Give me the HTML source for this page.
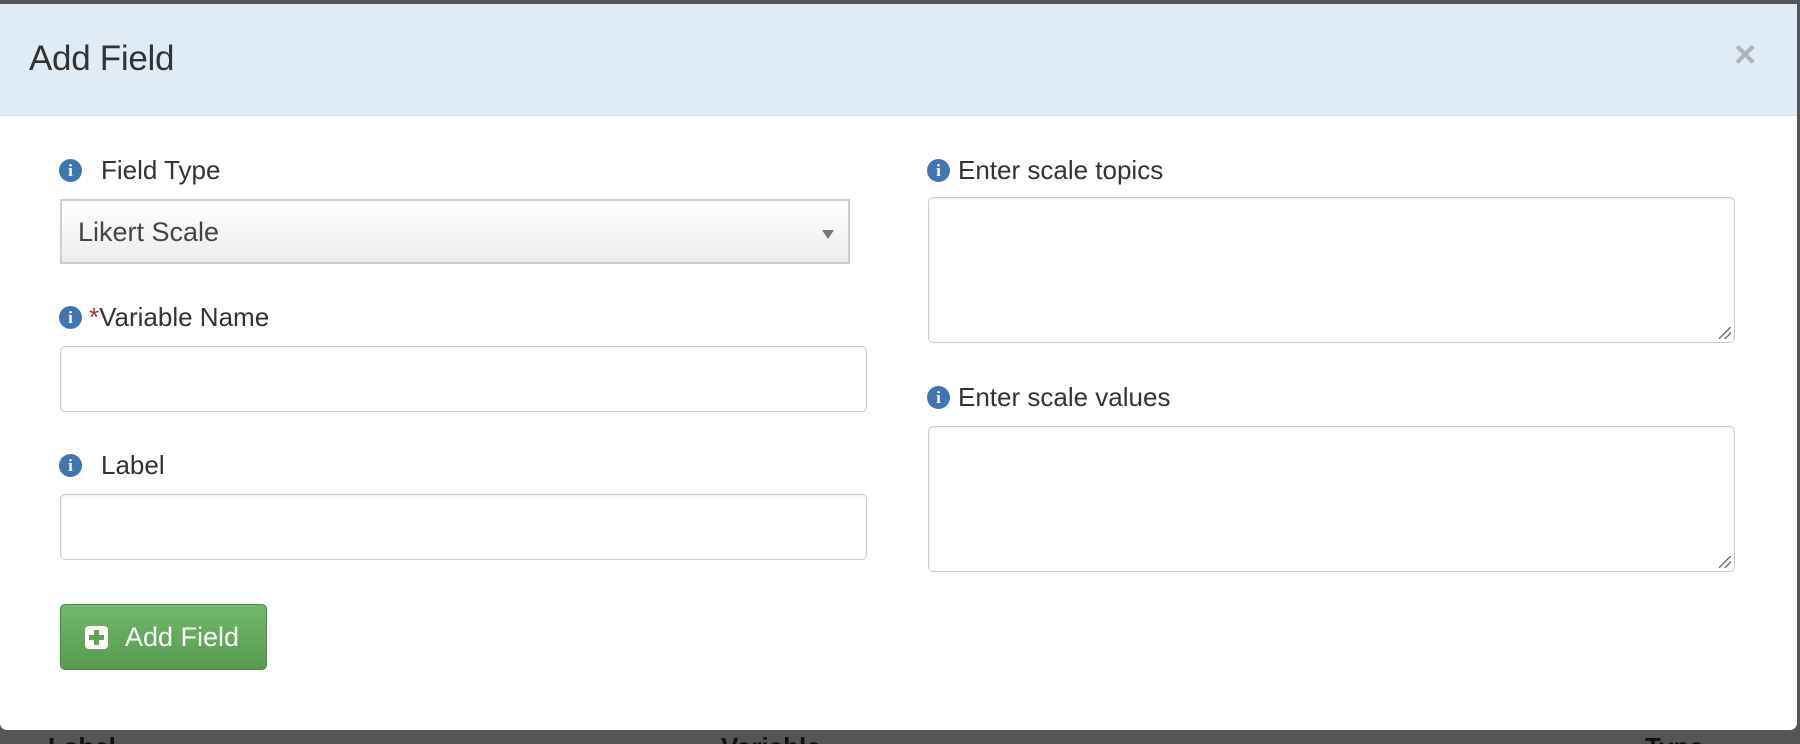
<!DOCTYPE html>
<html><head><meta charset="utf-8"><style>
*{box-sizing:border-box;margin:0;padding:0}
html,body{width:1800px;height:744px;overflow:hidden}
body{background:#555;font-family:"Liberation Sans",Arial,sans-serif;color:#333}
.wrap{position:relative;width:1800px;height:744px;overflow:hidden;background:#555}
.bg{position:absolute;top:732px;font-weight:bold;font-size:26px;line-height:30px;color:#111}
.modal{position:absolute;left:0;top:4px;width:1797px;height:726px;background:#fff;border-radius:0 0 7px 7px;overflow:hidden}
.hdr{height:112px;background:#dfebf5;border-bottom:1px solid #d5e0ea;position:relative}
.hdr h1{position:absolute;left:29px;top:35px;font-weight:normal;font-size:35px;color:#333;letter-spacing:-0.3px}
.close{position:absolute;left:1734px;top:30px;font-size:38px;color:#aeb4b8;font-weight:bold}
.lbl{position:absolute;font-size:26px;color:#333;display:flex;align-items:center}
.ic{width:23px;height:23px;border-radius:50%;background:#3f75b3;color:#fff;font:bold 17px "Liberation Serif",serif;display:inline-flex;align-items:center;justify-content:center}
.inp{position:absolute;border:1px solid #ccc;border-radius:5px;background:#fff;box-shadow:inset 0 1px 2px rgba(0,0,0,.08)}
.sel{position:absolute;left:60px;top:195px;width:790px;height:65px;border:2px solid #ccc;background:linear-gradient(#fff,#ececec);font-size:27px;color:#444;padding:16px 0 0 16px}
.sel:after{content:"";position:absolute;right:14px;top:29px;border:6px solid transparent;border-top:9px solid #777}
.btn{position:absolute;left:60px;top:600px;width:207px;height:66px;border:1px solid #4d8a47;border-radius:5px;background:linear-gradient(#72b86a,#579a50);color:#fff;font-size:27px;display:flex;align-items:center;padding-left:24px}
.pl{width:23px;height:23px;background:#fff;border-radius:4px;position:relative;margin-right:17px}
.pl:before{content:"";position:absolute;left:9px;top:4px;width:5px;height:15px;background:#5fa557}
.pl:after{content:"";position:absolute;left:4px;top:9px;width:15px;height:5px;background:#5fa557}
.rz{position:absolute;right:3px;bottom:3px;width:12px;height:12px;background:linear-gradient(135deg,transparent 45%,#666 46%,#666 52%,transparent 53%,transparent 70%,#666 71%,#666 77%,transparent 78%)}
</style></head><body><div class="wrap">
<div class="bg" style="left:48px">Label</div>
<div class="bg" style="left:721px">Variable</div>
<div class="bg" style="left:1645px">Type</div>
<div class="modal">
<div class="hdr"><h1>Add Field</h1><div class="close">×</div></div>
<div class="lbl" style="left:59px;top:151px"><span class="ic">i</span><span style="margin-left:19px">Field Type</span></div>
<div class="sel">Likert Scale</div>
<div class="lbl" style="left:59px;top:298px"><span class="ic">i</span><span style="margin-left:7px"><span style="color:#a33">*</span>Variable Name</span></div>
<div class="inp" style="left:60px;top:342px;width:807px;height:66px"></div>
<div class="lbl" style="left:59px;top:446px"><span class="ic">i</span><span style="margin-left:19px">Label</span></div>
<div class="inp" style="left:60px;top:490px;width:807px;height:66px"></div>
<div class="btn"><span class="pl"></span>Add Field</div>
<div class="lbl" style="left:927px;top:151px"><span class="ic">i</span><span style="margin-left:8px">Enter scale topics</span></div>
<div class="inp" style="left:928px;top:193px;width:807px;height:146px"><div class="rz"></div></div>
<div class="lbl" style="left:927px;top:378px"><span class="ic">i</span><span style="margin-left:8px">Enter scale values</span></div>
<div class="inp" style="left:928px;top:422px;width:807px;height:146px"><div class="rz"></div></div>
</div>
</div></body></html>
